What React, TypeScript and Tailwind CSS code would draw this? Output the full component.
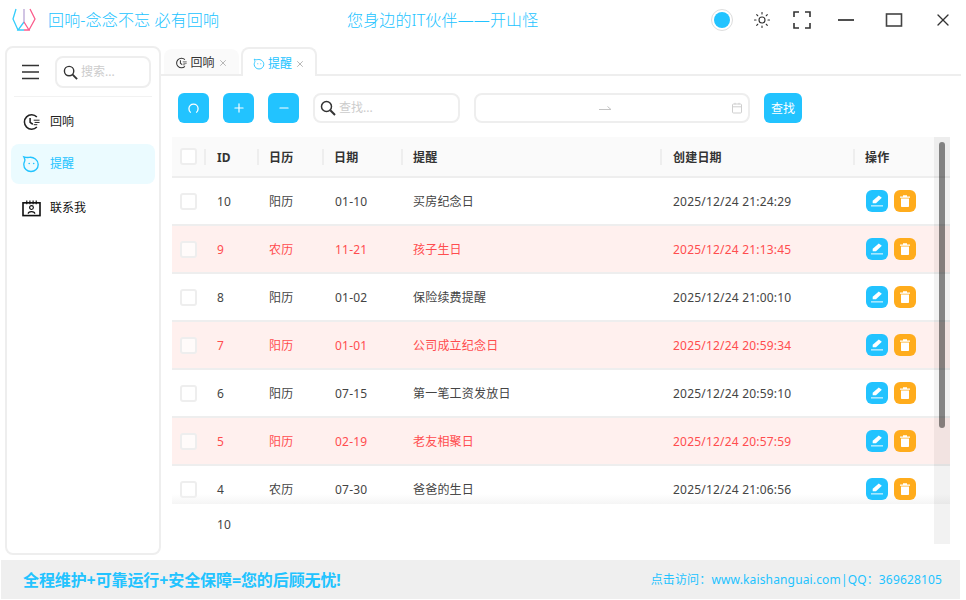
import { Minus, Plus, Sun, X } from "lucide-react"

const rows = [
  { id: 10, cal: "阳历", date: "01-10", name: "买房纪念日", created: "2025/12/24 21:24:29", red: false },
  { id: 9, cal: "农历", date: "11-21", name: "孩子生日", created: "2025/12/24 21:13:45", red: true },
  { id: 8, cal: "阳历", date: "01-02", name: "保险续费提醒", created: "2025/12/24 21:00:10", red: false },
  { id: 7, cal: "阳历", date: "01-01", name: "公司成立纪念日", created: "2025/12/24 20:59:34", red: true },
  { id: 6, cal: "阳历", date: "07-15", name: "第一笔工资发放日", created: "2025/12/24 20:59:10", red: false },
  { id: 5, cal: "阳历", date: "02-19", name: "老友相聚日", created: "2025/12/24 20:57:59", red: true },
  { id: 4, cal: "农历", date: "07-30", name: "爸爸的生日", created: "2025/12/24 21:06:56", red: false },
]

const headers = [
  { label: "ID", cls: "pl-[11px]" },
  { label: "日历", cls: "pl-[10px]" },
  { label: "日期", cls: "pl-[10px]" },
  { label: "提醒", cls: "pl-[10px]" },
  { label: "创建日期", cls: "pl-[11px]" },
  { label: "操作", cls: "pl-[10px]" },
]

const grid = "grid grid-cols-[33px_53px_65px_79px_259px_193px_96px] items-center"

function ClockLines({ className }: { className?: string }) {
  return (
    <svg viewBox="0 0 20 20" className={className} fill="none" stroke="currentColor" strokeWidth="1.7">
      <path d="M16.5 4.5A8 8 0 1 0 16.5 15.5" />
      <path d="M9 5.5V10.5L12 12.5" />
      <path d="M13 8H19.5M14 10.5H19.5M13 13H17" strokeWidth="1.1" />
    </svg>
  )
}

function Face({ className }: { className?: string }) {
  return (
    <svg viewBox="0 0 20 20" className={className} fill="none" stroke="currentColor" strokeWidth="1.5">
      <path d="M2 2C5 3 6 3 8 2.6C13 1.8 18 5.5 18 10.5C18 15 14.5 18.3 10 18.3C5.5 18.3 2 15 2 10.5C2 8 3.4 7 3.2 5.5C3.1 4.5 2.6 3.2 2 2Z" />
      <circle cx="8" cy="9.5" r="0.9" fill="currentColor" stroke="none" />
      <circle cx="13" cy="9.5" r="0.9" fill="currentColor" stroke="none" />
    </svg>
  )
}

function ContactIcon({ className }: { className?: string }) {
  return (
    <svg viewBox="0 0 20 18" className={className} fill="none" stroke="currentColor" strokeWidth="1.7">
      <rect x="1" y="3" width="18" height="13.5" />
      <path d="M5 0.5V4.5M8.3 0.5V4.5M11.7 0.5V4.5M15 0.5V4.5" strokeWidth="1.2" />
      <circle cx="10" cy="8" r="2" strokeWidth="1.2" />
      <path d="M6.5 14.5C6.5 11.5 13.5 11.5 13.5 14.5" strokeWidth="1.2" />
    </svg>
  )
}

function SearchIcon({ className }: { className?: string }) {
  return (
    <svg viewBox="0 0 16 16" className={className} fill="none" stroke="#333" strokeWidth="1.5">
      <circle cx="6.5" cy="6.5" r="5" />
      <path d="M10.3 10.3L15 15" strokeWidth="2" />
    </svg>
  )
}

function EditIcon() {
  return (
    <svg viewBox="0 0 14 14" className="w-[14px] h-[14px]">
      <path d="M8.8 1.5L11.8 3.8L6 9.3H2.7V6.8Z" fill="#fff" />
      <rect x="1" y="11.2" width="12" height="1.3" fill="#fff" opacity="0.75" />
    </svg>
  )
}

function TrashIcon() {
  return (
    <svg viewBox="0 0 14 14" className="w-[14px] h-[14px]">
      <path d="M5 1.2H9V2.4H12V3.7H2V2.4H5Z" fill="#fff" />
      <path d="M3 4.6H11V12C11 12.6 10.6 13 10 13H4C3.4 13 3 12.6 3 12Z" fill="#fff" />
    </svg>
  )
}

function Logo() {
  return (
    <svg viewBox="0 0 24 24" className="w-[24px] h-[24px]" fill="none" strokeWidth="1.3">
      <path d="M4 1L1 11L6 22" stroke="#35cdfb" />
      <path d="M12 14L6 22H12" stroke="#35cdfb" />
      <path d="M12 1V14" stroke="#b9a6d6" />
      <path d="M12 14L17 22H12" stroke="#fb5c8c" />
      <path d="M18 1L23 11L17 22" stroke="#fb5c8c" />
    </svg>
  )
}

function Cal() {
  return (
    <svg viewBox="0 0 12 12" className="w-[12px] h-[12px]" fill="none" stroke="#cfcfcf" strokeWidth="1">
      <rect x="1.5" y="2" width="9" height="9" rx="1" />
      <path d="M1.5 4.8H10.5M4 0.8V2.5M8 0.8V2.5" />
    </svg>
  )
}

export default function App() {
  return (
    <div
      className="w-[966px] h-[600px] bg-white flex flex-col overflow-hidden text-[12px] text-[#333]"
      style={{ fontFamily: '"Noto Sans", "Noto Sans CJK SC", sans-serif' }}
    >
      {/* title bar */}
      <div className="h-[40px] shrink-0 flex items-center pl-[12px]">
        <Logo />
        <span className="ml-[12px] w-[299px] text-[16px] font-light tracking-[0.15px] text-[#22c3ff]">回响-念念不忘 必有回响</span>
        <span className="w-[364px] text-[16px] font-light tracking-[0.15px] text-[#22c3ff]">您身边的IT伙伴——开山怪</span>
        <span className="w-[22px] h-[22px] rounded-full border border-[#ddd] flex items-center justify-center">
          <span className="w-[16px] h-[16px] rounded-full bg-[#22c3ff]" />
        </span>
        <Sun className="ml-[20px] w-[18px] h-[18px] text-[#333]" strokeWidth={1.5} />
        <svg viewBox="0 0 18 18" className="ml-[22px] w-[18px] h-[18px]" fill="none" stroke="#333" strokeWidth="1.6">
          <path d="M1 6V1H6M12 1H17V6M17 12V17H12M6 17H1V12" />
        </svg>
        <svg viewBox="0 0 18 18" className="ml-[26px] w-[18px] h-[18px]" stroke="#222" strokeWidth="1.6">
          <path d="M1 9H17" />
        </svg>
        <svg viewBox="0 0 18 18" className="ml-[30px] w-[18px] h-[18px]" fill="none" stroke="#444" strokeWidth="1.6">
          <rect x="1.5" y="3" width="15" height="12" />
        </svg>
        <X className="ml-[30px] w-[20px] h-[20px] text-[#333]" strokeWidth={1.6} />
      </div>

      <div className="h-[6px] shrink-0" />

      <div className="flex-1 min-h-0 flex pl-[5px]">
        {/* sidebar */}
        <div className="w-[156px] h-[509px] shrink-0 border-2 border-[#eee] rounded-[8px] flex flex-col px-[4px]">
          <div className="h-[49px] mx-[3px] shrink-0 flex items-center gap-[9px] border-b border-[#f2f2f2]">
            <div className="w-[32px] h-[32px] flex items-center justify-center">
              <svg viewBox="0 0 17 16" className="w-[17px] h-[16px]" stroke="#333" strokeWidth="1.7">
                <path d="M0 1.5H17M0 8H17M0 14.5H17" />
              </svg>
            </div>
            <div className="w-[96px] h-[32px] border-2 border-[#eee] rounded-[8px] flex items-center pl-[6px] gap-[3px] text-[#ccc]">
              <SearchIcon className="w-[15px] h-[15px]" />
              搜索...
            </div>
          </div>
          <div className="h-[15px]" />
          <div className="h-[20px] pl-[11px] flex items-center gap-[10px] text-[#222]">
            <ClockLines className="w-[18px] h-[18px]" />
            回响
          </div>
          <div className="mt-[12px] h-[40px] pl-[11px] flex items-center gap-[10px] bg-[#ebfbff] rounded-[8px] text-[#22c3ff]">
            <Face className="w-[18px] h-[18px]" />
            提醒
          </div>
          <div className="mt-[14px] h-[20px] pl-[11px] flex items-center gap-[9px] text-[#111]">
            <ContactIcon className="w-[19px] h-[17px]" />
            联系我
          </div>
        </div>

        {/* main */}
        <div className="flex-1 min-w-0 flex flex-col">
          <div className="h-[30px] shrink-0 flex items-end gap-[2px] pl-[3px] border-b-2 border-[#eee] mr-[5px]">
            <div className="w-[75px] h-[27px] -mb-[2px] pt-[2px] bg-[#fafafa] rounded-t-[8px] border-b-2 border-[#eee] flex items-center justify-center gap-[3px]">
              <ClockLines className="w-[12px] h-[12px]" />
              回响
              <X className="w-[10px] h-[10px] text-[#aaa]" />
            </div>
            <div className="w-[76px] h-[29px] -mb-[2px] pt-[2px] bg-white rounded-t-[8px] border-2 border-b-0 border-[#eee] flex items-center justify-center gap-[3px] text-[#22c3ff]">
              <Face className="w-[12px] h-[12px]" />
              提醒
              <X className="w-[10px] h-[10px] text-[#aaa]" />
            </div>
          </div>

          {/* toolbar */}
          <div className="mt-[17px] h-[30px] shrink-0 pl-[17px] flex items-center">
            <button className="w-[31px] h-[30px] rounded-[6px] bg-[#22c3ff] flex items-center justify-center">
              <svg viewBox="0 0 12 12" className="w-[11px] h-[11px]" fill="none" stroke="#fff" strokeWidth="1.4">
                <path d="M3 10.5C1.5 9.2 1 7.8 1 6.2C1 3.2 3.2 1.2 6 1.2C8.8 1.2 11 3.2 11 6.2C11 7.8 10.5 9.2 9 10.5" />
              </svg>
            </button>
            <button className="ml-[14px] w-[31px] h-[30px] rounded-[6px] bg-[#22c3ff] flex items-center justify-center">
              <Plus className="w-[14px] h-[14px] text-white" strokeWidth={2} />
            </button>
            <button className="ml-[14px] w-[31px] h-[30px] rounded-[6px] bg-[#22c3ff] flex items-center justify-center">
              <Minus className="w-[14px] h-[14px] text-white" strokeWidth={2} />
            </button>
            <div className="ml-[14px] w-[147px] h-[30px] border-2 border-[#eee] rounded-[8px] flex items-center pl-[5px] gap-[3px] text-[#ccc]">
              <SearchIcon className="w-[16px] h-[16px]" />
              查找...
            </div>
            <div className="ml-[14px] w-[276px] h-[30px] border-2 border-[#eee] rounded-[8px] flex items-center pr-[5px]">
              <span className="flex-1 flex justify-center pl-[2px]">
                <svg viewBox="0 0 12 6" className="w-[12px] h-[6px]" fill="none" stroke="#c4c4c4" strokeWidth="1">
                  <path d="M0 4.5H12L8.5 1.5" />
                </svg>
              </span>
              <Cal />
            </div>
            <button className="ml-[14px] w-[38px] h-[30px] pt-[1px] rounded-[6px] bg-[#22c3ff] text-white text-[12px]">查找</button>
          </div>

          {/* table */}
          <div className="relative ml-[11px] mt-[14px] w-[778px] h-[407px] text-[#444] tracking-[0.2px]">
            <div className={`${grid} h-[41px] bg-[#fafafa] border-b-2 border-[#eee] font-bold text-[#333]`}>
              <div className="pl-[8px]">
                <span className="block w-[17px] h-[17px] border-2 border-[#eee] rounded-[3px] bg-white" />
              </div>
              {headers.map((h) => (
                <div key={h.label} className={`h-[16px] -ml-px flex items-center border-l-2 border-[#eee] ${h.cls}`}>
                  <span className="pt-[2px]">{h.label}</span>
                </div>
              ))}
            </div>
            <div className="relative h-[326px] overflow-hidden">
              {/* fade at the clipped edge */}
              <div className="absolute left-0 right-0 bottom-0 h-[10px] bg-gradient-to-b from-transparent to-[#f5f5f5]" />
              {rows.map((r) => (
                <div
                  key={r.id}
                  className={`${grid} h-[48px] border-b-2 border-[#eee] ${r.red ? "bg-[#fff0ee] text-[#ff4d4f]" : ""}`}
                >
                  <div className="pl-[8px]">
                    <span className="block w-[17px] h-[17px] border-2 border-[#eee] rounded-[3px] bg-white/70" />
                  </div>
                  <div className="pl-[12px] pt-[2px]">{r.id}</div>
                  <div className="pl-[11px] pt-[2px]">{r.cal}</div>
                  <div className="pl-[12px] pt-[2px]">{r.date}</div>
                  <div className="pl-[11px] pt-[2px]">{r.name}</div>
                  <div className="pl-[12px] pt-[2px]">{r.created}</div>
                  <div className="relative pl-[12px] flex gap-[6px]">
                    <button className="w-[22px] h-[22px] rounded-[6px] bg-[#22c3ff] flex items-center justify-center">
                      <EditIcon />
                    </button>
                    <button className="w-[22px] h-[22px] rounded-[6px] bg-[#ffac1c] flex items-center justify-center">
                      <TrashIcon />
                    </button>
                  </div>
                </div>
              ))}
            </div>
            <div className="h-[40px] pl-[45px] pt-[2px] flex items-center">10</div>
            {/* overlay scrollbar */}
            <div className="absolute right-0 top-0 bottom-0 w-[16px] bg-black/5">
              <div className="mx-auto mt-[5px] w-[6px] h-[286px] rounded-full bg-black/45" />
            </div>
          </div>
        </div>
      </div>

      {/* footer */}
      <div className="h-[39px] shrink-0 mb-px ml-px mr-[6px] bg-[#efefef] flex items-center justify-between pl-[22px] pr-[18px] text-[#22c3ff]">
        <span className="text-[16px] font-bold tracking-[-0.1px]">全程维护+可靠运行+安全保障=您的后顾无忧!</span>
        <span className="tracking-[0.15px]">点击访问：www.kaishanguai.com|QQ：369628105</span>
      </div>
    </div>
  )
}
